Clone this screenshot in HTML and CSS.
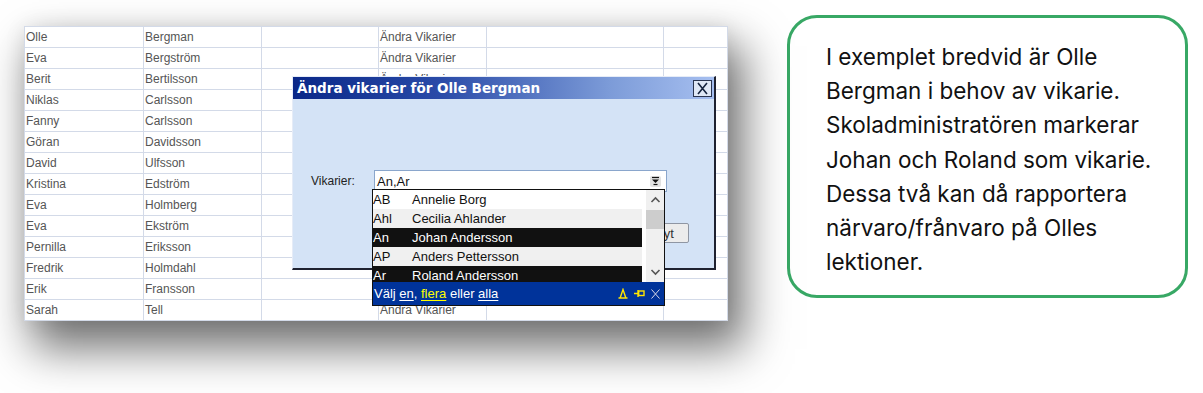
FILE: index.html
```html
<!DOCTYPE html>
<html>

<head>
  <title>Ändra vikarier</title>
  <link rel="stylesheet" href="styles.css">
</head>

<body>
  <div class="page">
    <div class="shot">
      <div class="grid">
        <div class="row"><div>Olle</div><div>Bergman</div><div></div><div>Ändra Vikarier</div><div></div><div></div></div>
        <div class="row"><div>Eva</div><div>Bergström</div><div></div><div>Ändra Vikarier</div><div></div><div></div></div>
        <div class="row"><div>Berit</div><div>Bertilsson</div><div></div><div>Ändra Vikarier</div><div></div><div></div></div>
        <div class="row"><div>Niklas</div><div>Carlsson</div><div></div><div>Ändra Vikarier</div><div></div><div></div></div>
        <div class="row"><div>Fanny</div><div>Carlsson</div><div></div><div>Ändra Vikarier</div><div></div><div></div></div>
        <div class="row"><div>Göran</div><div>Davidsson</div><div></div><div>Ändra Vikarier</div><div></div><div></div></div>
        <div class="row"><div>David</div><div>Ulfsson</div><div></div><div>Ändra Vikarier</div><div></div><div></div></div>
        <div class="row"><div>Kristina</div><div>Edström</div><div></div><div>Ändra Vikarier</div><div></div><div></div></div>
        <div class="row"><div>Eva</div><div>Holmberg</div><div></div><div>Ändra Vikarier</div><div></div><div></div></div>
        <div class="row"><div>Eva</div><div>Ekström</div><div></div><div>Ändra Vikarier</div><div></div><div></div></div>
        <div class="row"><div>Pernilla</div><div>Eriksson</div><div></div><div>Ändra Vikarier</div><div></div><div></div></div>
        <div class="row"><div>Fredrik</div><div>Holmdahl</div><div></div><div>Ändra Vikarier</div><div></div><div></div></div>
        <div class="row"><div>Erik</div><div>Fransson</div><div></div><div>Ändra Vikarier</div><div></div><div></div></div>
        <div class="row"><div>Sarah</div><div>Tell</div><div></div><div>Ändra Vikarier</div><div></div><div></div></div>
      </div>

      <!-- dialogrutan ovanpå listan -->
      <div class="dialog">
        <div class="dlg-title">
          <span>Ändra vikarier för Olle Bergman</span>
          <span class="dlg-close">
            <svg width="17" height="15" viewBox="0 0 17 15"><path d="M4 2 L13 13 M13 2 L4 13" stroke="#16243f" stroke-width="1.6" fill="none"/></svg>
          </span>
        </div>
        <div class="dlg-body">
          <div class="field-row">
            <span class="field-label">Vikarier:</span>
            <div class="combo">
              <span>An,Ar</span>
              <span class="combo-btn">
                <svg width="9" height="10" viewBox="0 0 9 10"><path d="M1 1.5 H8" stroke="#111" stroke-width="1.2"/><path d="M1 3.5 H8 L4.5 7 Z" fill="#111"/><path d="M2.5 8.5 H6.5" stroke="#111" stroke-width="1.2"/></svg>
              </span>
            </div>
          </div>
          <div class="btn-row">
            <button class="btn">Byt</button>
          </div>
        </div>
      </div>

      <!-- vikarielistan -->
      <div class="picker">
        <div class="picker-list">
          <div class="picker-rows">
            <div class="pick"><span class="code">AB</span>Annelie Borg</div>
            <div class="pick alt"><span class="code">Ahl</span>Cecilia Ahlander</div>
            <div class="pick sel"><span class="code">An</span>Johan Andersson</div>
            <div class="pick alt"><span class="code">AP</span>Anders Pettersson</div>
            <div class="pick sel"><span class="code">Ar</span>Roland Andersson</div>
          </div>
          <div class="scrollbar">
            <span class="sb-arrow">
              <svg width="11" height="8" viewBox="0 0 11 8"><path d="M1.5 6 L5.5 2 L9.5 6" stroke="#555" stroke-width="1.6" fill="none"/></svg>
            </span>
            <span class="sb-thumb"></span>
            <span class="sb-track"></span>
            <span class="sb-arrow">
              <svg width="11" height="8" viewBox="0 0 11 8"><path d="M1.5 2 L5.5 6 L9.5 2" stroke="#555" stroke-width="1.6" fill="none"/></svg>
            </span>
          </div>
        </div>
        <div class="picker-foot">
          <span>Välj <u>en</u>, <u class="yellow">flera</u> eller <u>alla</u></span>
          <span class="foot-icons">
            <svg width="10" height="11" viewBox="0 0 10 11"><path d="M2.3 9.5 L5 1.5 L7.7 9.5 M0.5 10 H9.5" stroke="#ffe600" stroke-width="1.4" fill="none"/></svg>
            <svg width="11" height="11" viewBox="0 0 11 11"><path d="M0 5.5 H4 M4 2 V9" stroke="#ffe600" stroke-width="1.4"/><rect x="4.7" y="3" width="5.3" height="4.5" fill="none" stroke="#ffe600" stroke-width="1.4"/></svg>
            <svg width="9" height="10" viewBox="0 0 9 10"><path d="M0.5 0.5 L8.5 9.5 M8.5 0.5 L0.5 9.5" stroke="#d8d8e8" stroke-width="1"/></svg>
          </span>
        </div>
      </div>
    </div>

    <div class="note">
      I exemplet bredvid är Olle Bergman i behov av vikarie. Skoladministratören markerar Johan och Roland som vikarie. Dessa två kan då rapportera närvaro/frånvaro på Olles lektioner.
    </div>
  </div>
</body>

</html>
```

FILE: styles.css
```css
/* sidan */
body,
html {
  margin: 0;
  height: 100%;
  background-color: #fff;
  overflow: hidden;
}

.page {
  display: flex;
  align-items: flex-start;
}

/* skärmbilden till vänster */
.shot {
  position: relative;
  margin: 26px 0 0 24px;
  width: 704px;
  height: 295px;
  overflow: hidden;
  background-color: #fff;
  box-shadow: 12px 24px 42px 4px rgba(0, 0, 0, 0.55), 0 0 20px rgba(0, 0, 0, 0.08);
  font-family: "Liberation Sans", Arial, sans-serif;
  font-size: 12px;
}

.grid {
  border-top: 1px solid #d3dae8;
  border-left: 1px solid #d3dae8;
}

.row {
  display: grid;
  grid-template-columns: 119px 118px 117px 108px 177px 1fr;
  height: 21px;
}

.row div {
  box-sizing: border-box;
  border-right: 1px solid #d3dae8;
  border-bottom: 1px solid #d3dae8;
  padding-left: 1px;
  line-height: 20px;
  color: #555;
  white-space: nowrap;
}

/* dialogen */
.dialog {
  position: absolute;
  left: 268px;
  top: 50px;
  width: 424px;
  height: 194px;
  box-sizing: border-box;
  border-top: 1px solid #e6ecf7;
  border-left: 1px solid #e6ecf7;
  border-right: 2px solid #1f2230;
  border-bottom: 2px solid #1f2230;
  background-color: #d4e3f6;
}

.dlg-title {
  display: flex;
  align-items: center;
  justify-content: space-between;
  height: 22px;
  padding: 0 2px 0 4px;
  background: linear-gradient(to right, #0a2888, #2a4ba8 35%, #7c9bd8 75%, #a6bff0);
  color: #fff;
  font-family: "DejaVu Sans", sans-serif;
  font-weight: bold;
  font-size: 13.5px;
}

.dlg-close {
  display: flex;
  align-items: center;
  justify-content: center;
  width: 17px;
  height: 15px;
  border: 1px solid #2a3550;
  background-color: #dfe8f6;
}

.dlg-body {
  padding: 71px 25px 0 18px;
}

.field-row {
  display: flex;
  align-items: center;
}

.field-label {
  width: 63px;
  color: #222;
}

.combo {
  display: flex;
  align-items: center;
  justify-content: space-between;
  box-sizing: border-box;
  width: 293px;
  height: 22px;
  padding: 0 5px 0 2px;
  border: 1px solid #8aa6cc;
  background-color: #fff;
  color: #111;
  font-size: 13px;
}

.combo-btn {
  display: flex;
  align-items: center;
  justify-content: center;
  width: 11px;
  height: 11px;
  border-radius: 2px;
  background-color: #e2e2e2;
}

.btn-row {
  display: flex;
  justify-content: flex-end;
  margin-top: 31px;
}

.btn {
  width: 49px;
  height: 20px;
  padding: 0;
  border: 1px solid #8f96a3;
  border-radius: 2px;
  background-color: #ececec;
  color: #333;
  font-family: "Liberation Sans", Arial, sans-serif;
  font-size: 13px;
}

/* listan med vikarier */
.picker {
  position: absolute;
  left: 348px;
  top: 163px;
  width: 291px;
  border: 1px solid #111;
  background-color: #fff;
}

.picker-list {
  display: flex;
  justify-content: space-between;
  height: 92px;
  overflow: hidden;
}

.picker-rows {
  width: 269px;
}

.pick {
  display: flex;
  height: 19px;
  line-height: 19px;
  color: #111;
  font-size: 13px;
  white-space: nowrap;
}

.pick .code {
  width: 39px;
}

.pick.alt {
  background-color: #f0f0f0;
}

.pick.sel {
  background-color: #111;
  color: #fff;
}

.scrollbar {
  display: flex;
  flex-direction: column;
  width: 18px;
  background-color: #f0f0f0;
}

.sb-arrow {
  display: flex;
  align-items: center;
  justify-content: center;
  height: 20px;
}

.sb-thumb {
  height: 19px;
  background-color: #cdcdcd;
}

.sb-track {
  flex: 1;
}

.picker-foot {
  display: flex;
  align-items: center;
  justify-content: space-between;
  height: 23px;
  padding: 0 4px 0 1px;
  background-color: #00339a;
  color: #fff;
  font-size: 13px;
}

.picker-foot u {
  text-underline-offset: 2px;
}

.picker-foot .yellow {
  color: #ffff00;
}

.foot-icons {
  display: flex;
  align-items: center;
  gap: 6px;
}

/* rutan med förklaring */
.note {
  box-sizing: border-box;
  margin: 15px 0 0 59px;
  width: 401px;
  height: 283px;
  padding: 22px 30px 0 36px;
  border: 3px solid #38a865;
  border-radius: 30px;
  font-family: Inter, "Noto Sans", sans-serif;
  font-size: 22.5px;
  line-height: 34.2px;
  color: #111;
}
```
